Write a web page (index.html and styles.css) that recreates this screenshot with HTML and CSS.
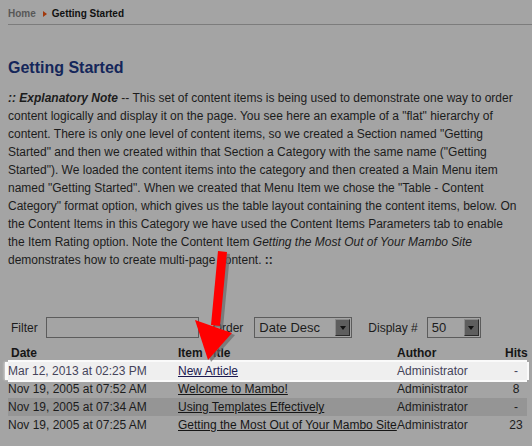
FILE: index.html
```html
<!DOCTYPE html>
<html>
<head>
<meta charset="utf-8">
<link rel="stylesheet" href="styles.css">
</head>
<body>
<div class="page">
  <div class="breadcrumb">
    <span class="crumb-home">Home</span>
    <span class="crumb-sep"></span>
    <span class="crumb-current">Getting Started</span>
  </div>
  <h1 class="title">Getting Started</h1>
  <p class="intro"><b><i>:: Explanatory Note</i></b> -- This set of content items is being used to demonstrate one way to order content logically and display it on the page. You see here an example of a "flat" hierarchy of content. There is only one level of content items, so we created a Section named "Getting Started" and then we created within that Section a Category with the same name ("Getting Started"). We loaded the content items into the category and then created a Main Menu item named "Getting Started". When we created that Menu Item we chose the "Table - Content Category" format option, which gives us the table layout containing the content items, below. On the Content Items in this Category we have used the Content Items Parameters tab to enable the Item Rating option. Note the Content Item <i>Getting the Most Out of Your Mambo Site</i> demonstrates how to create multi-page content. <b>::</b></p>

  <div class="filters">
    <span class="lbl lbl-filter">Filter</span>
    <span class="textbox"></span>
    <span class="lbl lbl-order">Order</span>
    <span class="select sel-order"><span class="sel-text">Date Desc</span><span class="sel-btn"><span class="tri"></span></span></span>
    <span class="lbl lbl-display">Display #</span>
    <span class="select sel-num"><span class="sel-text">50</span><span class="sel-btn"><span class="tri"></span></span></span>
  </div>

  <table class="items">
    <colgroup>
      <col class="c-date"><col class="c-title"><col class="c-author"><col class="c-hits">
    </colgroup>
    <thead>
      <tr><th class="h-date">Date</th><th>Item Title</th><th>Author</th><th class="hits">Hits</th></tr>
    </thead>
    <tbody>
      <tr class="row-hl"><td>Mar 12, 2013 at 02:23 PM</td><td><a href="#">New Article</a></td><td>Administrator</td><td class="hits">-</td></tr>
      <tr><td>Nov 19, 2005 at 07:52 AM</td><td><a href="#">Welcome to Mambo!</a></td><td>Administrator</td><td class="hits">8</td></tr>
      <tr class="row-alt"><td>Nov 19, 2005 at 07:34 AM</td><td><a href="#">Using Templates Effectively</a></td><td>Administrator</td><td class="hits">-</td></tr>
      <tr><td>Nov 19, 2005 at 07:25 AM</td><td><a href="#">Getting the Most Out of Your Mambo Site</a></td><td>Administrator</td><td class="hits">23</td></tr>
    </tbody>
  </table>

  <svg class="arrow" width="532" height="446" viewBox="0 0 532 446">
    <g transform="translate(3,2)" fill="#6a6a6a" opacity="0.7">
      <polygon points="218,251 227,252 220,326 211,325"/>
      <polygon points="195,320 232,333 208,360"/>
    </g>
    <g fill="#ff0000">
      <polygon points="218,251 227,252 220,326 211,325"/>
      <polygon points="195,320 232,333 208,360"/>
    </g>
  </svg>
</div>
</body>
</html>
```
FILE: styles.css
```css
html, body {
  margin: 0;
  padding: 0;
}
body {
  background: #a4a4a4;
  font-family: "Liberation Sans", Arial, sans-serif;
  color: #1c1c1c;
  width: 532px;
  height: 446px;
  overflow: hidden;
}
.page {
  position: relative;
  width: 532px;
  height: 446px;
}
.breadcrumb {
  margin-left: 8px;
  padding-top: 8px;
  padding-bottom: 4px;
  border-bottom: 1px solid #7c7c7c;
  font-size: 10px;
  font-weight: bold;
  line-height: 12px;
  display: flex;
  align-items: center;
}
.crumb-home {
  color: #585858;
}
.crumb-sep {
  width: 0;
  height: 0;
  border-top: 3.5px solid transparent;
  border-bottom: 3.5px solid transparent;
  border-left: 4px solid #a2380c;
  margin: 0 5px 0 7px;
}
.crumb-current {
  color: #111;
}
.title {
  margin: 33px 8px 0;
  font-size: 16px;
  line-height: 20px;
  font-weight: bold;
  color: #14265a;
}
.intro {
  margin: 11px 11px 0 8px;
  font-size: 12px;
  line-height: 18px;
  color: #1c1c1c;
}
.filters {
  display: flex;
  align-items: center;
  margin-top: 48px;
  height: 21px;
  font-size: 12px;
  color: #1c1c1c;
}
.lbl-filter { margin-left: 11px; }
.textbox {
  box-sizing: border-box;
  width: 153px;
  height: 21px;
  border: 1px solid #5c5c5c;
  margin-left: 8px;
}
.lbl-order { margin-left: 14px; }
.select {
  box-sizing: border-box;
  height: 21px;
  border: 1px solid #5c5c5c;
  display: flex;
  align-items: center;
  justify-content: space-between;
  padding: 0 1px 0 4px;
  font-size: 13px;
}
.sel-order { width: 98px; margin-left: 11px; }
.lbl-display { margin-left: 16px; }
.sel-num { width: 54px; margin-left: 9px; }
.sel-btn {
  box-sizing: border-box;
  width: 15px;
  height: 17px;
  background: #5e5e5e;
  border: 1px solid #8a8a8a;
  border-right-color: #2a2a2a;
  border-bottom-color: #2a2a2a;
  display: flex;
  align-items: center;
  justify-content: center;
}
.tri {
  width: 0;
  height: 0;
  border-left: 3.5px solid transparent;
  border-right: 3.5px solid transparent;
  border-top: 4px solid #111;
}
.items {
  margin: 6px 0 0 8px;
  width: 519px;
  border-collapse: collapse;
  table-layout: fixed;
  font-size: 12px;
}
.c-date { width: 170px; }
.c-title { width: 219px; }
.c-author { width: 108px; }
.c-hits { width: 22px; }
.items th, .items td {
  padding: 0;
  height: 18px;
  line-height: 18px;
  text-align: left;
  white-space: nowrap;
  overflow: visible;
}
.items th {
  font-weight: bold;
  color: #161616;
}
.items th.h-date { padding-left: 3px; }
.items .hits { text-align: center; }
.items a {
  color: #161616;
  text-decoration: underline;
}
.row-alt td {
  background: #959595;
}
.row-hl td {
  background: #efefef;
  color: #45445a;
  box-shadow: 0 -2px 0 #fafafa, 0 2px 0 #fafafa;
}
.row-hl td:first-child {
  box-shadow: 0 -2px 0 #fafafa, 0 2px 0 #fafafa, -3px 0 0 #fafafa, -4px 0 2px #d0d0d0;
}
.row-hl td:last-child {
  box-shadow: 0 -2px 0 #fafafa, 0 2px 0 #fafafa, 2px 0 0 #fafafa;
}
.row-hl a {
  color: #1c1a50;
}
.arrow {
  position: absolute;
  left: 0;
  top: 0;
  pointer-events: none;
}
```
